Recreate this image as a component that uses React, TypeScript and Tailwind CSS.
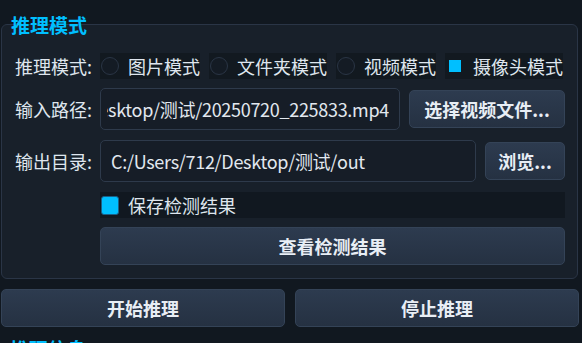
import React from "react";

const font = "font-['Noto_Sans_CJK_SC','Noto_Sans',sans-serif]";

function Radio({ label, checked }: { label: string; checked?: boolean }) {
  return (
    <div className="flex h-[26px] items-center bg-[#121920]">
      <div className="ml-[1px] flex h-[18px] w-[18px] items-center justify-center">
        {checked ? (
          <div className="h-[12px] w-[12px] bg-[#00bfff]" />
        ) : (
          <div className="h-[18px] w-[18px] rounded-full border-[1.5px] border-[#2a3545] bg-[#141b24]" />
        )}
      </div>
      <span className="ml-[9px] whitespace-nowrap text-[18px] leading-[26px] text-[#dfe6ee]">{label}</span>
    </div>
  );
}

function Btn({ children, className = "" }: { children: React.ReactNode; className?: string }) {
  return (
    <div
      className={`flex h-[38px] items-center justify-center rounded-[5px] border border-[#344357] bg-gradient-to-b from-[#2d3b4f] to-[#253142] text-[18px] font-bold text-[#e8eef5] ${className}`}
    >
      {children}
    </div>
  );
}

function Label({ children }: { children: React.ReactNode }) {
  return <div className="w-[85px] shrink-0 whitespace-nowrap text-[18px] text-[#dfe6ee]">{children}</div>;
}

function Input({ value, className = "" }: { value: string; className?: string }) {
  return (
    <div
      className={`flex h-[42px] items-center rounded-[5px] border border-[#2e3a4b] bg-[#161d27] pl-[6px] pr-[10px] ${className}`}
    >
      <div className="flex min-w-0 flex-1 justify-end overflow-hidden">
        <span className="whitespace-nowrap text-[18px] tracking-[-0.3px] text-[#e2e8ef]">{value}</span>
      </div>
    </div>
  );
}

function InputStart({ value, className = "" }: { value: string; className?: string }) {
  return (
    <div
      className={`flex h-[42px] items-center overflow-hidden rounded-[5px] border border-[#2e3a4b] bg-[#161d27] px-[10px] ${className}`}
    >
      <span className="whitespace-nowrap text-[18px] tracking-[-0.3px] text-[#e2e8ef]">{value}</span>
    </div>
  );
}

export default function App() {
  return (
    <div className={`h-[343px] w-[582px] overflow-hidden bg-[#111820] ${font}`}>
      <div className="relative ml-[1px] mt-[24px] w-[577px] rounded-[6px] border border-[#2a3546] bg-[#18202a] pl-[13px] pr-[12px] pt-[28px] pb-[13px]">
        <div className="absolute left-[9px] top-[-13px] text-[19px] font-bold leading-[26px] text-[#00bfff]">推理模式</div>

        <div className="flex h-[26px] items-center">
          <Label>推理模式:</Label>
          <div className="flex gap-[9px]">
            <Radio label="图片模式" />
            <Radio label="文件夹模式" />
            <Radio label="视频模式" />
            <Radio label="摄像头模式" checked />
          </div>
        </div>

        <div className="mt-[9px] flex h-[42px] items-center">
          <Label>输入路径:</Label>
          <Input value="C:/Users/712/Desktop/测试/20250720_225833.mp4" className="w-[300px]" />
          <Btn className="ml-[9px] w-[156px]">选择视频文件...</Btn>
        </div>

        <div className="mt-[10px] flex h-[42px] items-center">
          <Label>输出目录:</Label>
          <InputStart value="C:/Users/712/Desktop/测试/out" className="w-[376px]" />
          <Btn className="ml-[9px] w-[80px]">浏览...</Btn>
        </div>

        <div className="mt-[10px] ml-[85px] flex h-[26px] items-center bg-[#111820]">
          <div className="ml-[1px] h-[19px] w-[18px] rounded-[3px] border border-[#1b5f86] bg-[#00bfff]" />
          <span className="ml-[9px] text-[18px] text-[#dfe6ee]">保存检测结果</span>
        </div>

        <Btn className="mt-[9px] ml-[85px] w-[465px]">查看检测结果</Btn>
      </div>

      <div className="mt-[10px] ml-[1px] flex w-[578px] gap-[10px]">
        <Btn className="flex-1">开始推理</Btn>
        <Btn className="flex-1">停止推理</Btn>
      </div>

      <div className="ml-[10px] mt-[9px] text-[19px] font-bold leading-[26px] text-[#00bfff]">推理信息</div>
    </div>
  );
}
